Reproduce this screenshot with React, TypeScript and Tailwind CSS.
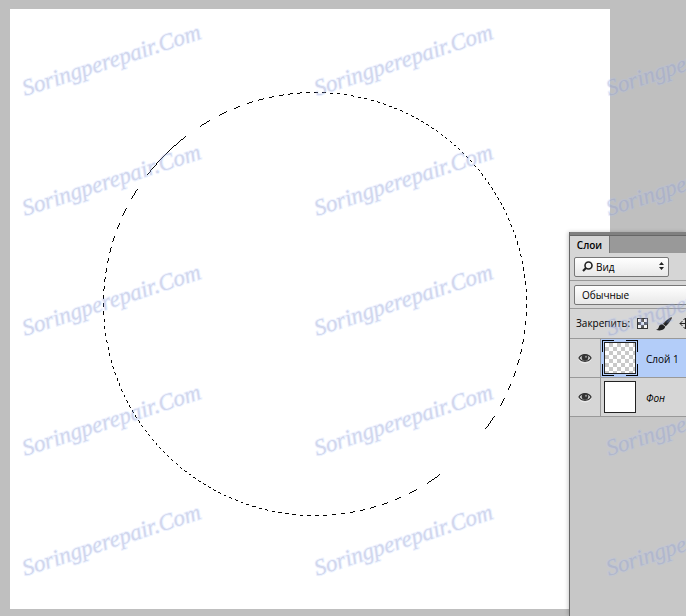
type Layer = {
  id: number;
  name: string;
  selected?: boolean;
  background?: boolean;
};

const layers: Layer[] = [
  { id: 1, name: "Слой 1", selected: true },
  { id: 2, name: "Фон", background: true },
];

const watermarkColumns = [0, 1, 2];
const watermarkRows = [0, 1, 2, 3, 4];

// One pixel wide circle, kept only where the diagonal stripes are dark.
function marchingAnts(size: number) {
  const r = (size - 1) / 2;
  const pixels = new Set<string>();
  const reach = Math.ceil(r * Math.SQRT1_2);
  for (let i = -reach + 0.5; i <= reach - 0.5; i++) {
    const edge = Math.round(Math.sqrt(r * r - i * i) + r) - r;
    for (const [x, y] of [
      [i, edge],
      [i, -edge],
      [edge, i],
      [-edge, i],
    ]) {
      pixels.add(`${x + r},${y + r}`);
    }
  }
  return [...pixels]
    .map((key) => key.split(",").map(Number))
    .filter(([x, y]) => (x + y + 5) % 8 < 4)
    .map(([x, y]) => `M${x} ${y}h1v1h-1z`)
    .join("");
}

function Selection() {
  return (
    <svg
      viewBox="0 0 424 424"
      className="ml-[93px] mt-[83px] block size-[424px]"
      shapeRendering="crispEdges"
      aria-hidden="true"
    >
      <path d={marchingAnts(424)} fill="#000" />
    </svg>
  );
}

function Watermark() {
  return (
    <svg
      className="pointer-events-none absolute inset-0 size-full select-none"
      aria-hidden="true"
    >
      {watermarkRows.map((row) =>
        watermarkColumns.map((col) => (
          <text
            key={`${row}-${col}`}
            transform={`translate(${25 + col * 292} ${96 + row * 120}) rotate(-18)`}
            className="fill-[#8484b4]/30 stroke-[#a9c4ff]/20 font-['Liberation_Serif',serif] text-[23px] italic"
            strokeWidth="2"
          >
            Soringperepair.Com
          </text>
        )),
      )}
    </svg>
  );
}

function EyeIcon() {
  return (
    <svg viewBox="0 0 14 12" className="h-3 w-[14px]" aria-hidden="true">
      <path d="M1 7.500C3.500 12 10.500 12 13 7.500" fill="none" stroke="#f0f0f0" />
      <path d="M1 6C3.500 1.500 10.500 1.500 13 6C10.500 10.300 3.500 10.300 1 6Z" fill="#ddd" stroke="#333" strokeWidth="1.3" />
      <circle cx="7" cy="5.500" r="3.300" fill="#333" />
      <circle cx="8" cy="4.800" r="1" fill="#999" />
    </svg>
  );
}

function SearchIcon() {
  return (
    <svg viewBox="0 0 11 11" className="size-[11px]" fill="none" stroke="#222" aria-hidden="true">
      <circle cx="6.500" cy="4.500" r="3.500" strokeWidth="1.600" />
      <path d="M4 7L1 10" strokeWidth="2.200" />
    </svg>
  );
}

function PixelsIcon() {
  return (
    <svg viewBox="0 0 11 11" className="size-[11px]" shapeRendering="crispEdges" aria-hidden="true">
      <path d="M0 0h11v11H0z" fill="#333" />
      <path d="M1 1h9v9H1z" fill="#f4f4f4" />
      <path d="M4 1h3v3H4zM1 4h3v3H1zM7 4h3v3H7zM4 7h3v3H4z" fill="#555" />
    </svg>
  );
}

function BrushIcon() {
  return (
    <svg viewBox="0 0 16 14" className="h-[14px] w-4" fill="#222" aria-hidden="true">
      <path d="M15.700 0.300C16.500 1.300 12.500 6.500 9.800 9.200L6.800 6.800C9 4.300 14.800 -0.500 15.700 0.300Z" />
      <path d="M6.300 7.200L9.200 9.600C9 12.800 4.500 14.500 0 12.800C2.300 12.300 2.500 11 3 9.500C3.500 7.800 5 6.900 6.300 7.200Z" />
    </svg>
  );
}

function MoveIcon() {
  return (
    <svg viewBox="0 0 13 13" className="size-[13px]" fill="none" stroke="#222" aria-hidden="true">
      <path d="M6.500 1v11M1 6.500h11M4.500 3l2-2 2 2M4.500 10l2 2 2-2M3.500 4L1 6.500 3.500 9M9.500 4L12 6.500 9.500 9" />
    </svg>
  );
}

function Thumbnail({ layer }: { layer: Layer }) {
  if (layer.background) {
    return <span className="m-[2px] size-8 border border-[#222] bg-white" />;
  }
  return (
    <svg viewBox="0 0 36 36" className="size-9" shapeRendering="crispEdges" aria-hidden="true">
      <defs>
        <pattern id="checker" width="8" height="8" patternUnits="userSpaceOnUse" x="3" y="3">
          <path d="M0 0h8v8H0z" fill="#fff" />
          <path d="M4 0h4v4H4zM0 4h4v4H0z" fill="#c9c9c9" />
        </pattern>
      </defs>
      <path d="M2 2h32v32H2z" fill="#222" />
      <path d="M3 3h30v30H3z" fill="url(#checker)" />
      <path d="M.5 12V.5H12M24 .5h11.500V12M35.500 24v11.500H24M12 35.500H.5V24" fill="none" stroke="#000" />
    </svg>
  );
}

function LayersPanel() {
  return (
    <section className="absolute bottom-0 right-0 top-[232px] w-[117px] overflow-hidden border-l border-[#666] bg-[#c7c7c7] font-['Open_Sans',sans-serif] text-[10px] text-black shadow-[-1px_0_4px_rgba(0,0,0,0.2)]">
      <div className="h-1 border-b border-[#666] bg-[#808080]" />
      <div className="flex h-[17px] bg-[#999]">
        <button type="button" className="w-10 border-r border-[#777] bg-[#d6d6d6] font-semibold leading-4">
          Слои
        </button>
      </div>

      <div className="bg-[#d6d6d6]">
        <div className="h-7 border-b border-[#999] px-1 pt-1">
          <div className="relative h-5 w-[95px]">
            <select
              aria-label="Фильтр"
              className="size-full appearance-none rounded-[2px] border border-[#777] bg-linear-to-b from-white to-[#e8e8e8] pl-[21px]"
            >
              <option>Вид</option>
            </select>
            <span className="pointer-events-none absolute left-2 top-1">
              <SearchIcon />
            </span>
            <svg viewBox="0 0 5 8" className="pointer-events-none absolute right-[5px] top-[5px] h-2 w-[5px]" fill="#222" aria-hidden="true">
              <path d="M0 3L2.500 0L5 3zM0 5h5L2.500 8z" />
            </svg>
          </div>
        </div>

        <div className="h-7 border-b border-[#999] pl-1 pt-1">
          <select
            aria-label="Режим наложения"
            className="h-5 w-[160px] appearance-none rounded-[2px] border border-[#777] bg-linear-to-b from-white to-[#e8e8e8] pl-[7px]"
          >
            <option>Обычные</option>
          </select>
        </div>

        <div className="flex h-[30px] w-[160px] items-center border-b border-[#999] pl-[6px]">
          <span className="mr-[7px]">Закрепить:</span>
          <button type="button" aria-label="Пиксели" className="mr-2">
            <PixelsIcon />
          </button>
          <button type="button" aria-label="Кисть" className="mr-[7px]">
            <BrushIcon />
          </button>
          <button type="button" aria-label="Положение">
            <MoveIcon />
          </button>
        </div>

        <ul>
          {layers.map((layer) => (
            <li key={layer.id} className="flex h-[39px] border-b border-[#999]">
              <button
                type="button"
                aria-label="Видимость"
                className="flex w-[31px] items-center justify-center border-r border-[#999]"
              >
                <EyeIcon />
              </button>
              <div
                className={`flex flex-1 items-center gap-2 pl-px ${
                  layer.selected ? "bg-[#b3cdf9]" : ""
                }`}
              >
                <Thumbnail layer={layer} />
                <span
                  className={`whitespace-nowrap pt-[2px] ${layer.background ? "italic" : ""}`}
                >
                  {layer.name}
                </span>
              </div>
            </li>
          ))}
        </ul>
      </div>
    </section>
  );
}

export default function App() {
  return (
    <main className="relative min-h-screen overflow-hidden bg-[#bfbfbf] pb-[7px] pl-[10px] pt-[9px]">
      <div className="flow-root h-[600px] w-[600px] bg-white">
        <Selection />
      </div>
      <LayersPanel />
      <Watermark />
    </main>
  );
}
